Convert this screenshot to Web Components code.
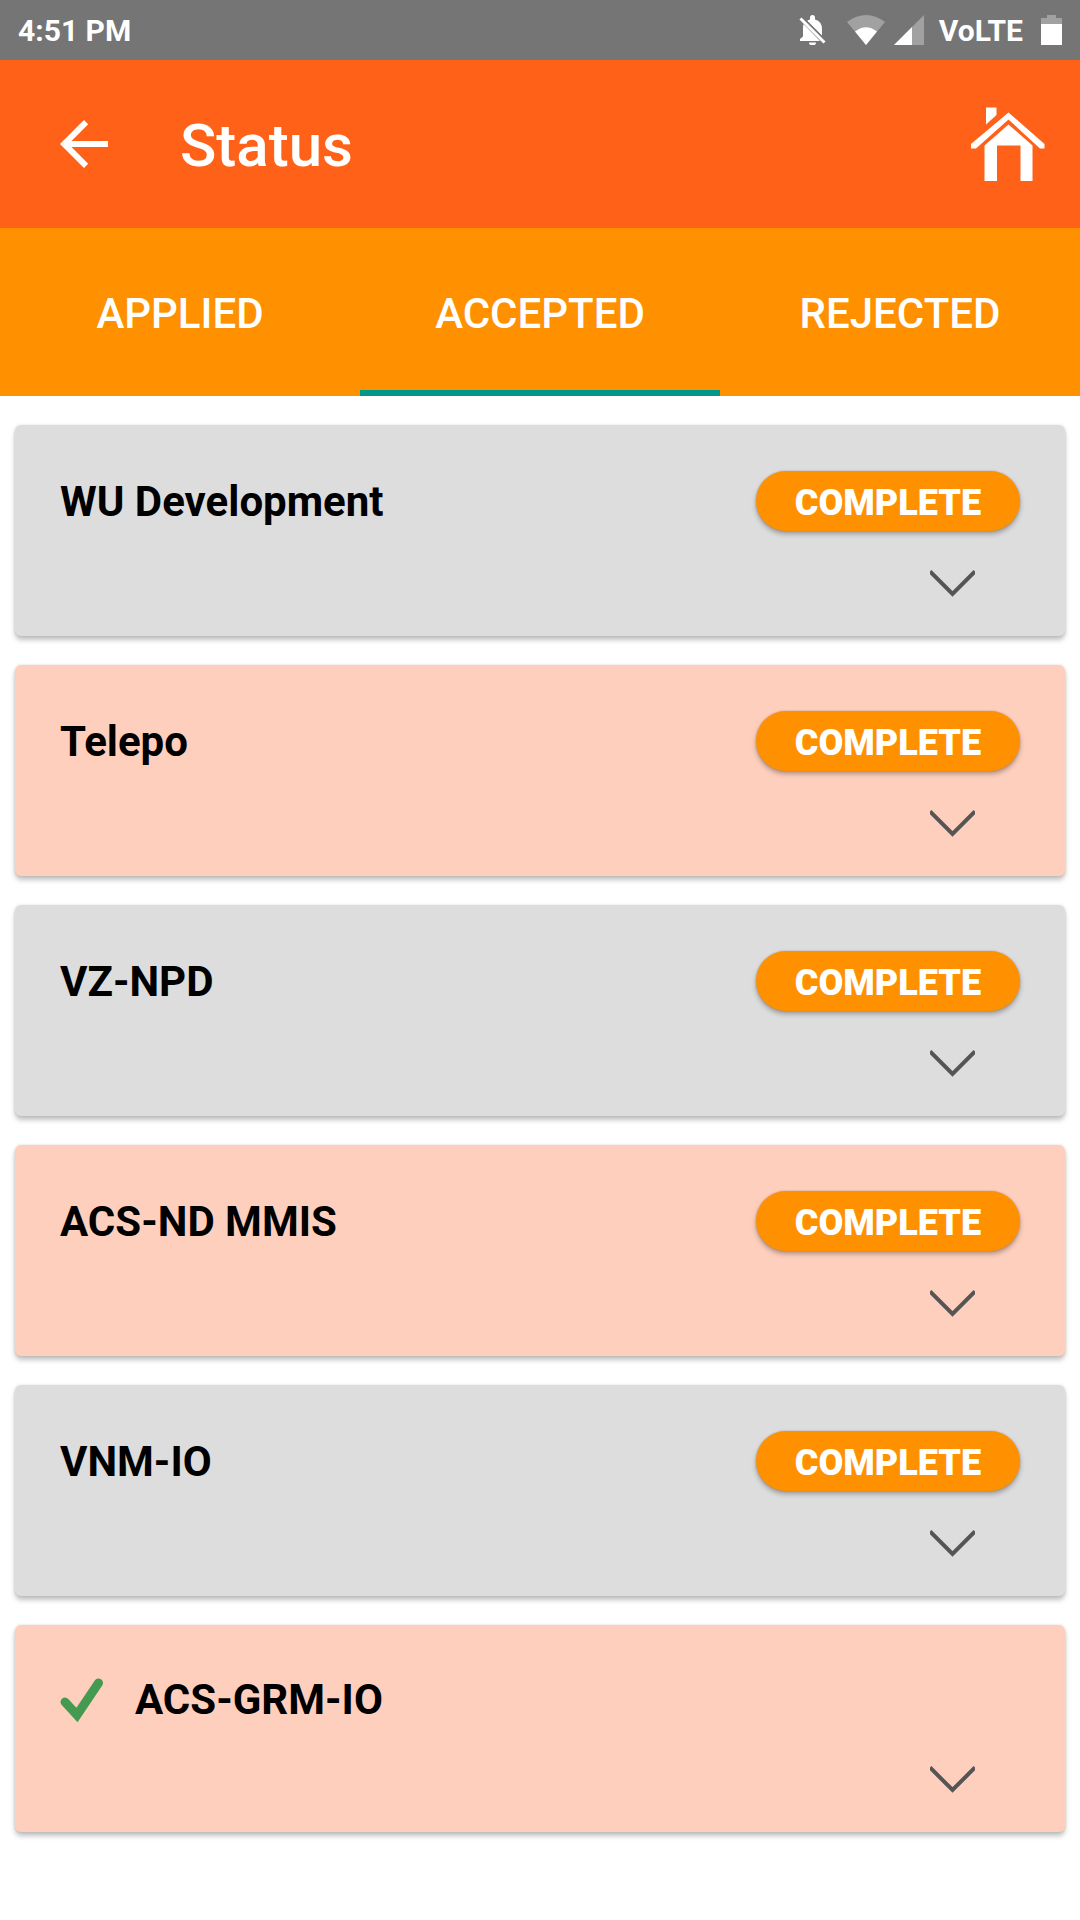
<!DOCTYPE html>
<html lang="en">
<head>
<meta charset="utf-8">
<meta name="viewport" content="width=device-width, initial-scale=1">
<title>Status</title>
<style>
  body { margin: 0; background: #fff; font-family: Roboto, "Liberation Sans", sans-serif; }
</style>
</head>
<body>
<status-screen></status-screen>

<template id="system-bar">
  <style>
    :host { display: flex; align-items: center; justify-content: space-between; height: 60px; padding: 0 18px; background: #757575; color: #fff; font-size: 30px; line-height: 36px; font-weight: 700; }
    time, .network { padding-top: 2px; }
    .icons { display: flex; align-items: center; }
    svg { display: block; height: 30px; }
    .bell { width: 28px; margin-right: 20px; }
    .wifi { width: 38px; margin-right: 9px; }
    .signal { width: 30px; margin-right: 15px; }
    .battery { width: 21px; margin-left: 18px; }
  </style>
  <time><slot name="time"></slot></time>
  <div class="icons">
    <svg class="bell" viewBox="0 0 28 30" aria-hidden="true">
      <path fill="#fff" d="M8 6Q9.500 4.800 11 4.500V2.500a2.500 2.500 0 0 1 5 0V4.500Q23 6.500 23 14V21zM4.500 9 21 26H1V24L4 21.500V13Q4 11 4.500 9zM10 27.500h7a3.500 3 0 0 1-7 0z"/>
      <path d="M3 2 27 26" stroke="#757575" stroke-width="2"/>
      <path d="M1.500 3.500 25.500 27.500" stroke="#fff" stroke-width="3"/>
    </svg>
    <svg class="wifi" viewBox="0 0 38 30" aria-hidden="true">
      <path fill="#a1a1a1" d="M19 30 0 7Q19-7 38 7z"/>
      <path fill="#fff" d="M19 30 8 16.500Q19 8 30 16.500z"/>
    </svg>
    <svg class="signal" viewBox="0 0 30 30" aria-hidden="true">
      <path fill="#a1a1a1" d="M0 30 30 0V30z"/>
      <path fill="#fff" d="M0 30 18 12V30z"/>
    </svg>
    <span class="network"><slot name="network"></slot></span>
    <svg class="battery" viewBox="0 0 21 30" aria-hidden="true">
      <path fill="#a1a1a1" d="M0 3H6V0H15V3H21V9H0z"/>
      <path fill="#fff" d="M0 9H21V30H0z"/>
    </svg>
  </div>
</template>

<template id="app-header">
  <style>
    :host { display: flex; align-items: center; height: 168px; padding: 0 35px 0 60px; background: #ff6119; color: #fff; }
    button { display: block; padding: 0; border: 0; background: none; color: inherit; cursor: pointer; }
    svg { display: block; }
    h1 { flex: 1; margin: 0 0 0 72px; padding-top: 4px; font-size: 60px; line-height: 72px; font-weight: 500; }
  </style>
  <button aria-label="Back">
    <svg width="48" height="48" viewBox="0 0 48 48"><path fill="currentColor" d="M48 21H11.500L28.200 4.200 24 0 0 24 24 48 28.200 43.800 11.500 27H48z"/></svg>
  </button>
  <h1><slot></slot></h1>
  <button aria-label="Home">
    <svg width="75" height="75" viewBox="0 0 75 75" fill="currentColor"><path d="M16 0.500H26.500V8L16 17.500z"/><path d="M38.500 5.500 74.500 37V41.500H70L38.500 12.500 6 41.500H1V37z"/><path d="M38.500 17.500 62.500 38.500V74H50.500V38.500H27V74H14.500V38.500z"/></svg>
  </button>
</template>

<template id="status-tab">
  <style>
    :host { display: flex; flex: 1 1 0; }
    button { flex: 1; padding: 10px 0 0; border: 0; border-bottom: 6px solid transparent; background: none; color: #fff; font: 500 42px/48px Roboto, "Liberation Sans", sans-serif; cursor: pointer; }
    button[aria-selected="true"] { border-bottom-color: #009688; }
  </style>
  <button role="tab"><slot></slot></button>
</template>

<template id="status-tabs">
  <style>:host { display: flex; height: 168px; background: #ff9100; }</style>
  <slot></slot>
</template>

<template id="project-card">
  <style>
    :host { display: flex; flex-direction: column; gap: 30px; padding: 46px 45px 30px; border-radius: 6px; background: #ddd; box-shadow: 0 4px 5px rgba(0,0,0,.24), 0 0 3px rgba(0,0,0,.12); }
    :host([tone="peach"]) { background: #ffcfbd; }
    .row { display: flex; align-items: center; min-height: 56px; }
    h2 { flex: 1; margin: 0; padding-top: 2px; font-size: 42px; line-height: 50px; font-weight: 700; color: #000; }
    svg { display: block; }
    .check { margin-right: 30px; }
    .complete { min-width: 264px; height: 60px; padding: 3px 30px 0; border: 0; border-radius: 30px; background: #ff9100; color: #fff; font: 900 36px/42px Roboto, "Liberation Sans", sans-serif; box-shadow: 0 3px 5px rgba(0,0,0,.3), 0 0 2px rgba(0,0,0,.2); cursor: pointer; }
    .expand { align-self: flex-end; margin-right: 45px; padding: 0; border: 0; background: none; cursor: pointer; }
    :host([done]) .complete, :host(:not([done])) .check { display: none; }
  </style>
  <div class="row">
    <svg class="check" width="45" height="45" viewBox="0 0 45 45" role="img" aria-label="Completed"><path d="M5 25 17 38 38.500 6" fill="none" stroke="#449a50" stroke-width="9" stroke-linecap="round"/></svg>
    <h2><slot></slot></h2>
    <button class="complete">COMPLETE</button>
  </div>
  <button class="expand" aria-label="Show details">
    <svg width="45" height="45" viewBox="0 0 45 45"><path d="M0 10.500 22.500 33 45 10.500" fill="none" stroke="#555" stroke-width="4"/></svg>
  </button>
</template>

<template id="status-screen">
  <style>
    :host { display: flex; flex-direction: column; }
    main { display: flex; flex-direction: column; gap: 29px; padding: 29px 15px; }
  </style>
  <system-bar><span slot="time">4:51 PM</span><span slot="network">VoLTE</span></system-bar>
  <app-header>Status</app-header>
  <status-tabs role="tablist">
    <status-tab>APPLIED</status-tab>
    <status-tab selected>ACCEPTED</status-tab>
    <status-tab>REJECTED</status-tab>
  </status-tabs>
  <main>
    <project-card>WU Development</project-card>
    <project-card tone="peach">Telepo</project-card>
    <project-card>VZ-NPD</project-card>
    <project-card tone="peach">ACS-ND MMIS</project-card>
    <project-card>VNM-IO</project-card>
    <project-card tone="peach" done>ACS-GRM-IO</project-card>
  </main>
</template>

<script>
  class TemplateElement extends HTMLElement {
    constructor() {
      super();
      const template = document.getElementById(this.localName);
      this.attachShadow({ mode: "open" }).append(template.content.cloneNode(true));
    }
  }
  class SystemBar extends TemplateElement {}
  class AppHeader extends TemplateElement {}
  class StatusTabs extends TemplateElement {
    connectedCallback() {
      this.addEventListener("click", (event) => {
        const tab = event.target.closest("status-tab");
        if (!tab) return;
        for (const item of this.querySelectorAll("status-tab")) item.toggleAttribute("selected", item === tab);
      });
    }
  }
  class StatusTab extends TemplateElement {
    static observedAttributes = ["selected"];
    connectedCallback() { this.update(); }
    attributeChangedCallback() { this.update(); }
    update() {
      this.shadowRoot.querySelector("button").setAttribute("aria-selected", String(this.hasAttribute("selected")));
    }
  }
  class ProjectCard extends TemplateElement {
    connectedCallback() {
      this.shadowRoot.querySelector(".complete").onclick = () => this.toggleAttribute("done", true);
    }
  }
  class StatusScreen extends TemplateElement {}

  customElements.define("system-bar", SystemBar);
  customElements.define("app-header", AppHeader);
  customElements.define("status-tabs", StatusTabs);
  customElements.define("status-tab", StatusTab);
  customElements.define("project-card", ProjectCard);
  customElements.define("status-screen", StatusScreen);
</script>
</body>
</html>
